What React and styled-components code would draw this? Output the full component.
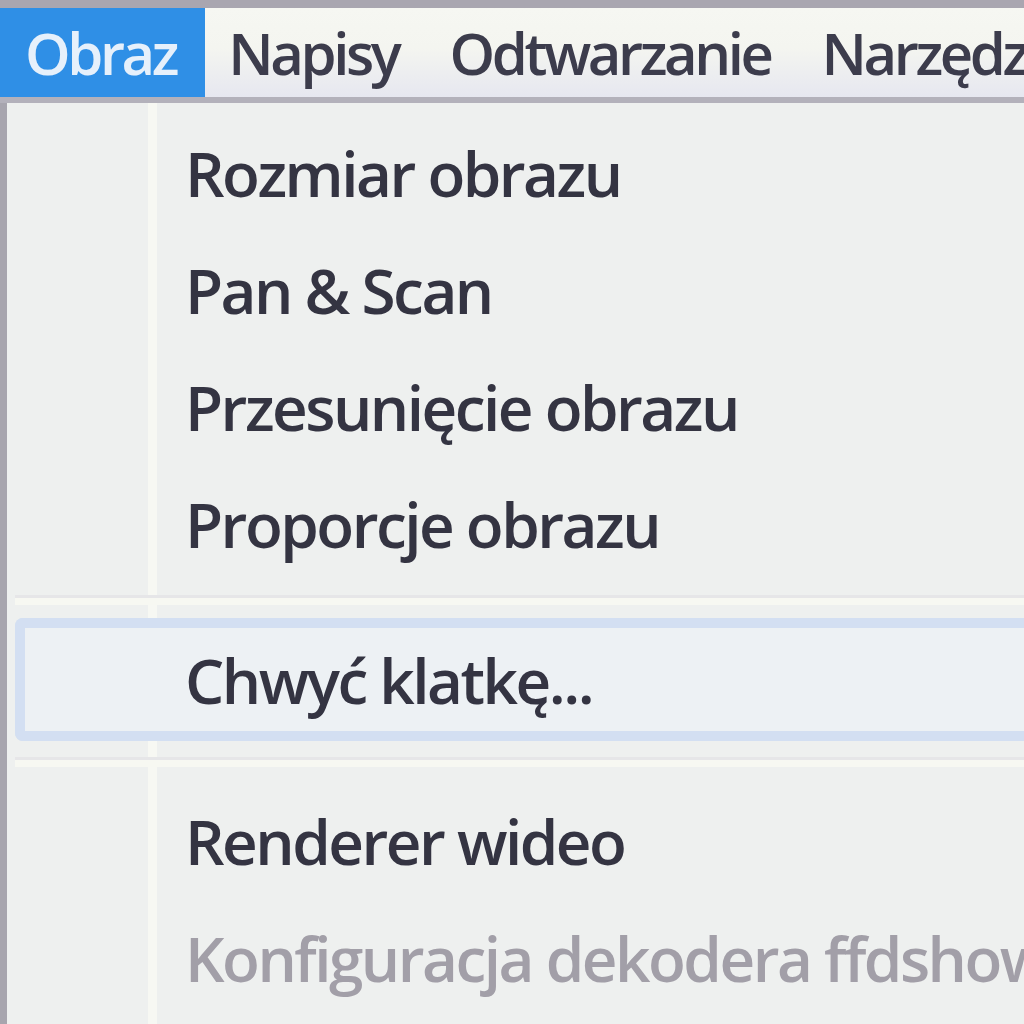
import React from "react";
import styled, { createGlobalStyle } from "styled-components";

const Global = createGlobalStyle`
  html, body { margin: 0; padding: 0; background: #eef0ee; overflow: hidden; }
  #root { width: 1024px; height: 1024px; }
`;

const Screen = styled.div`
  width: 1024px;
  height: 1024px;
  display: flex;
  flex-direction: column;
  font-family: "Open Sans", "Noto Sans", sans-serif;
  overflow: hidden;
`;

const TopStrip = styled.div`
  height: 8px;
  flex: none;
  background: #a9a6b0;
`;

const MenuBar = styled.div`
  height: 89px;
  flex: none;
  display: flex;
  align-items: stretch;
  background: linear-gradient(#f6f7f2 0%, #f4f5f0 45%, #e6e7f0 100%);
  border-bottom: 6px solid #b3b1bb;
`;

const BarItem = styled.div`
  display: flex;
  align-items: center;
  padding-left: ${(p) => (p.$first ? "25px" : "23px")};
  padding-right: ${(p) => (p.$first ? "29px" : "28px")};
  font-size: 58px;
  font-weight: 600;
  letter-spacing: -3.4px;
  white-space: nowrap;
  color: ${(p) => (p.$active ? "#e6f0fb" : "#3c3c4c")};
  background: ${(p) => (p.$active ? "#2f8fe6" : "transparent")};
`;

const Dropdown = styled.div`
  flex: 1;
  display: flex;
  flex-direction: column;
  padding: 11px 0 0 8px;
  border-left: 7px solid #a7a5ae;
  background:
    linear-gradient(
      to right,
      transparent 141px,
      #f7f8f3 141px,
      #f7f8f3 150px,
      transparent 150px
    ),
    #eef0ef;
`;

const Item = styled.div`
  height: ${(p) => (p.$hover ? "123px" : "117px")};
  flex: none;
  display: flex;
  align-items: center;
  box-sizing: border-box;
  padding-left: ${(p) => (p.$hover ? "160px" : "170px")};
  font-size: 62px;
  font-weight: 600;
  letter-spacing: -2.5px;
  white-space: nowrap;
  color: ${(p) => (p.$disabled ? "#a29fa8" : "#343442")};
  border: ${(p) => (p.$hover ? "10px solid #d3dff2" : "none")};
  border-right: none;
  border-radius: ${(p) => (p.$hover ? "8px 0 0 8px" : "0")};
  background: ${(p) => (p.$hover ? "#edf1f4" : "transparent")};
`;

const Separator = styled.div`
  height: ${(p) => p.$h}px;
  flex: none;
  display: flex;
  align-items: center;
  &::after {
    content: "";
    flex: 1;
    height: 3px;
    background: #e6e6e8;
    border-bottom: 7px solid #f7f8f2;
  }
`;

export default function App() {
  return (
    <Screen>
      <Global />
      <TopStrip />
      <MenuBar>
        <BarItem $active $first>Obraz</BarItem>
        <BarItem>Napisy</BarItem>
        <BarItem>Odtwarzanie</BarItem>
        <BarItem>Narzędzia</BarItem>
      </MenuBar>
      <Dropdown>
        <Item>Rozmiar obrazu</Item>
        <Item>Pan &amp; Scan</Item>
        <Item>Przesunięcie obrazu</Item>
        <Item>Proporcje obrazu</Item>
        <Separator $h={36} />
        <Item $hover>Chwyć klatkę...</Item>
        <Separator $h={41} />
        <Item>Renderer wideo</Item>
        <Item $disabled>Konfiguracja dekodera ffdshow</Item>
      </Dropdown>
    </Screen>
  );
}
